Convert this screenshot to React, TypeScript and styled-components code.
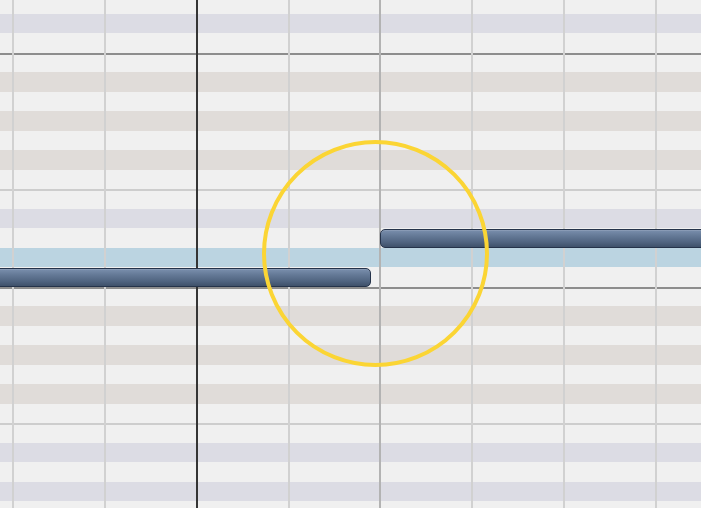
import React from "react";
import styled, { createGlobalStyle } from "styled-components";

const Global = createGlobalStyle`
  html, body { margin: 0; padding: 0; background: #f0f0f0; overflow: hidden; }
  body { font-family: "Liberation Sans", Arial, sans-serif; }
`;

const ROW_H = 19.5;
const BEAT_W = 91.86;

type Kind = "white" | "lav" | "beige" | "hl";
type Edge = "none" | "octave" | "ef";

const rowColors: Record<Kind, string> = {
  white: "#f0f0f0",
  lav: "#dcdce4",
  beige: "#e0dcd9",
  hl: "#bbd4e1",
};

const edgeShadow: Record<Edge, string> = {
  none: "none",
  octave: "inset 0 2px 0 #8d8d8d",
  ef: "inset 0 2px 0 #cdcdcd",
};

const Roll = styled.div`
  position: relative;
  width: 701px;
  height: 508px;
  overflow: hidden;
  background: #f0f0f0;
`;

const Rows = styled.div`
  display: flex;
  flex-direction: column;
  margin-top: -6px;
`;

const Row = styled.div<{ $kind: Kind; $edge: Edge }>`
  flex: 0 0 ${ROW_H}px;
  height: ${ROW_H}px;
  display: flex;
  align-items: center;
  background: ${(p) => rowColors[p.$kind]};
  box-shadow: ${(p) => edgeShadow[p.$edge]};
`;

const Note = styled.div<{ $start: number; $len: number }>`
  position: relative;
  z-index: 2;
  box-sizing: border-box;
  margin-left: ${(p) => p.$start}px;
  width: ${(p) => p.$len}px;
  height: 18.5px;
  margin-top: 1px;
  flex: 0 0 auto;
  border: 1.5px solid #25334a;
  border-radius: 5px;
  background: linear-gradient(#7a8fad 0%, #647996 35%, #506480 72%, #3f516a 100%);
  box-shadow: inset 0 1px 0 rgba(255, 255, 255, 0.12);
`;

const Beats = styled.div`
  position: absolute;
  top: 0;
  bottom: 0;
  left: 12px;
  display: flex;
  z-index: 1;
  pointer-events: none;
`;

type Line = "beat" | "bar" | "head";
const lineColors: Record<Line, string> = {
  beat: "#d1d1d1",
  bar: "#b3b3b3",
  head: "#353535",
};

const Beat = styled.div<{ $line: Line }>`
  flex: 0 0 ${BEAT_W}px;
  box-sizing: border-box;
  border-left: ${(p) => (p.$line === "head" ? "2.5px" : "2px")} solid ${(p) => lineColors[p.$line]};
`;

const Focus = styled.div`
  position: absolute;
  z-index: 3;
  left: 262px;
  top: 140px;
  width: 227px;
  height: 227px;
  box-sizing: border-box;
  border: 4.5px solid #fbd534;
  border-radius: 50%;
`;

type RowDef = { kind: Kind; edge: Edge; note?: { start: number; len: number } };

const octave = (hl: boolean, notes: Record<string, { start: number; len: number }> = {}): RowDef[] => [
  { kind: "white", edge: "octave", note: notes.B },
  { kind: "beige", edge: "none" },
  { kind: "white", edge: "none" },
  { kind: "beige", edge: "none" },
  { kind: "white", edge: "none" },
  { kind: "beige", edge: "none" },
  { kind: "white", edge: "none" },
  { kind: "white", edge: "ef" },
  { kind: "lav", edge: "none" },
  { kind: "white", edge: "none", note: notes.D },
  { kind: hl ? "hl" : "lav", edge: "none" },
  { kind: "white", edge: "none", note: notes.C },
];

const rows: RowDef[] = [
  { kind: "white", edge: "none" },
  { kind: "lav", edge: "none" },
  { kind: "white", edge: "none" },
  ...octave(true, {
    D: { start: 380, len: 340 },
    C: { start: -20, len: 391 },
  }),
  ...octave(false),
];

const beats: Line[] = ["beat", "beat", "head", "beat", "bar", "beat", "beat", "beat"];

export default function App() {
  return (
    <>
      <Global />
      <Roll>
        <Rows>
          {rows.map((r, i) => (
            <Row key={i} $kind={r.kind} $edge={r.edge}>
              {r.note && <Note $start={r.note.start} $len={r.note.len} />}
            </Row>
          ))}
        </Rows>
        <Beats>
          {beats.map((b, i) => (
            <Beat key={i} $line={b} />
          ))}
        </Beats>
        <Focus />
      </Roll>
    </>
  );
}
